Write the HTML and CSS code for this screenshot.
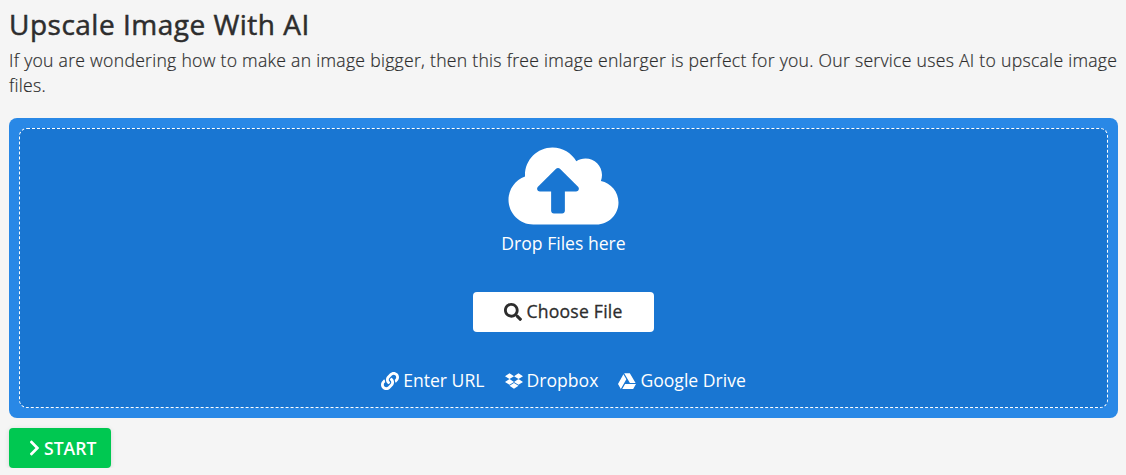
FILE: index.html
```html
<!DOCTYPE html>
<html lang="en">
<head>
<meta charset="utf-8">
<title>Upscale Image With AI</title>
<link rel="stylesheet" href="styles.css">
</head>
<body>
<main class="page">
  <h1 class="title">Upscale Image With AI</h1>
  <p class="lead">If you are wondering how to make an image bigger, then this free image enlarger is perfect for you. Our service uses AI to upscale image files.</p>
  <section class="uploader">
    <div class="dropzone">
      <svg class="cloud" viewBox="0 0 640 512"><path d="M537.6 226.6c4.1-10.7 6.4-22.4 6.4-34.6 0-53-43-96-96-96-19.7 0-38.1 6-53.3 16.2C367 64.2 315.3 32 256 32c-88.4 0-160 71.6-160 160 0 2.7.1 5.4.2 8.1C40.2 219.8 0 273.2 0 336c0 79.5 64.5 144 144 144h368c70.7 0 128-57.3 128-128 0-61.9-44-113.6-102.4-125.4zM393.4 288H328v112c0 8.8-7.2 16-16 16h-48c-8.8 0-16-7.2-16-16V288h-65.4c-14.3 0-21.4-17.2-11.3-27.3l105.4-105.4c6.2-6.2 16.4-6.2 22.6 0l105.4 105.4c10.1 10.1 2.9 27.3-11.3 27.3z"/></svg>
      <div class="drop-label">Drop Files here</div>
      <button class="choose" type="button">
        <svg class="icon" viewBox="0 0 512 512"><path d="M505 442.7L405.3 343c-4.5-4.5-10.6-7-17-7H372c27.6-35.3 44-79.7 44-128C416 93.1 322.9 0 208 0S0 93.1 0 208s93.1 208 208 208c48.3 0 92.7-16.4 128-44v16.3c0 6.4 2.5 12.5 7 17l99.7 99.7c9.4 9.4 24.6 9.4 33.9 0l28.3-28.3c9.4-9.4 9.4-24.6.1-34zM208 336c-70.7 0-128-57.2-128-128 0-70.7 57.2-128 128-128 70.7 0 128 57.2 128 128 0 70.7-57.2 128-128 128z"/></svg>
        <span>Choose File</span>
      </button>
      <div class="sources">
        <a class="source">
          <svg class="icon" viewBox="0 0 512 512"><path d="M326.612 185.391c59.747 59.809 58.927 155.698.36 214.59-.11.12-.24.25-.36.37l-67.2 67.2c-59.27 59.27-155.699 59.262-214.96 0-59.27-59.26-59.27-155.7 0-214.96l37.106-37.106c9.84-9.84 26.786-3.3 27.294 10.606.648 17.722 3.826 35.527 9.69 52.721 1.986 5.822.567 12.262-3.783 16.612l-13.087 13.087c-28.026 28.026-28.905 73.66-1.155 101.96 28.024 28.579 74.086 28.749 102.325.51l67.2-67.19c28.191-28.191 28.073-73.757 0-101.83-3.701-3.694-7.429-6.564-10.341-8.569a16.037 16.037 0 0 1-6.947-12.606c-.396-10.567 3.348-21.456 11.698-29.806l21.054-21.055c5.521-5.521 14.182-6.199 20.584-1.731a152.482 152.482 0 0 1 20.522 17.197zM467.547 44.449c-59.261-59.262-155.69-59.27-214.96 0l-67.2 67.2c-.12.12-.25.25-.36.37-58.566 58.892-59.387 154.781.36 214.59a152.454 152.454 0 0 0 20.521 17.196c6.402 4.468 15.064 3.789 20.584-1.731l21.054-21.055c8.35-8.35 12.094-19.239 11.698-29.806a16.037 16.037 0 0 0-6.947-12.606c-2.912-2.005-6.64-4.875-10.341-8.569-28.073-28.073-28.191-73.639 0-101.83l67.2-67.19c28.239-28.239 74.3-28.069 102.325.51 27.75 28.3 26.872 73.934-1.155 101.96l-13.087 13.087c-4.35 4.35-5.769 10.79-3.783 16.612 5.864 17.194 9.042 34.999 9.69 52.721.509 13.906 17.454 20.446 27.294 10.606l37.106-37.106c59.271-59.259 59.271-155.699.001-214.959z"/></svg>
          <span>Enter URL</span>
        </a>
        <a class="source">
          <svg class="icon" viewBox="0 0 528 512"><path d="M264.4 116.3l-132 84.3 132 84.3-132 84.3L0 284.1l132.3-84.3L0 116.3 132.3 32l132.1 84.3zM131.6 395.7l132-84.3 132 84.3-132 84.3-132-84.3zm132.8-111.6l132-84.3-132-83.6L395.7 32 528 116.3l-132.3 84.3L528 284.8l-132.3 84.3-131.3-85z"/></svg>
          <span>Dropbox</span>
        </a>
        <a class="source">
          <svg class="icon" viewBox="0 0 512 512"><path d="M339 314.9L175.4 32h161.2l163.6 282.9H339zm-137.5 23.6L120.9 480h310.5L512 338.5H201.5zM154.1 67.4L0 338.5 80.6 480 237 208.8 154.1 67.4z"/></svg>
          <span>Google Drive</span>
        </a>
      </div>
    </div>
  </section>
  <button class="start" type="button">
    <svg class="chevron" viewBox="0 0 320 512"><path d="M285.476 272.971L91.132 467.314c-9.373 9.373-24.569 9.373-33.941 0l-22.667-22.667c-9.357-9.357-9.375-24.522-.04-33.901L188.505 256 34.484 101.255c-9.335-9.379-9.317-24.544.04-33.901l22.667-22.667c9.373-9.373 24.569-9.373 33.941 0L285.475 239.03c9.373 9.372 9.373 24.568.001 33.941z"/></svg>
    <span>START</span>
  </button>
</main>
</body>
</html>
```
FILE: styles.css
```css
* { box-sizing: border-box; }

body {
  margin: 0;
  background: #f5f5f5;
  color: #2d2d2d;
  font-family: "Open Sans", sans-serif;
  font-size: 17.6px;
  line-height: 25px;
}

svg { display: block; fill: currentColor; flex: none; }

.page { padding: 7px 8px 0 9px; }

.title {
  margin: 0;
  font-size: 28px;
  font-weight: 400;
  line-height: 34px;
  letter-spacing: .5px;
  -webkit-text-stroke: .5px currentColor;
}

.lead {
  margin: 7px 0 20px;
  font-weight: 300;
  letter-spacing: .28px;
  -webkit-text-stroke: .2px currentColor;
}

.uploader {
  height: 300px;
  padding: 10px;
  border-radius: 8px;
  background: #2988e6;
}

.dropzone {
  display: flex;
  flex-direction: column;
  align-items: center;
  height: 280px;
  padding-top: 13px;
  border: 1px dashed #fff;
  border-radius: 8px;
  background: #1976d2;
  color: #fff;
}

.cloud { width: 111px; height: 88px; }

.drop-label { margin-top: 1px; }

.choose {
  display: flex;
  align-items: center;
  justify-content: center;
  gap: 4px;
  width: 181px;
  height: 40px;
  margin-top: 36px;
  padding: 0 0 1px;
  border: 0;
  border-radius: 4px;
  background: #fff;
  color: #2d2d2d;
  font: 400 17.6px/25px "Open Sans", sans-serif;
  letter-spacing: .22px;
  -webkit-text-stroke: .3px currentColor;
}

.icon { width: 18px; height: 18px; }

.sources { display: flex; gap: 20px; margin-top: 36px; }

.source { display: flex; align-items: center; gap: 4px; }

.start {
  display: flex;
  align-items: center;
  gap: 4px;
  width: 102px;
  height: 40px;
  margin-top: 10px;
  padding: 0 0 0 20px;
  border: 0;
  border-radius: 4px;
  background: #00c851;
  box-shadow: 0 1px 5px rgba(0, 0, 0, .12);
  color: #fff;
  font: 600 17.6px/25px "Open Sans", sans-serif;
}

.chevron { width: 11px; height: 18px; }
```
